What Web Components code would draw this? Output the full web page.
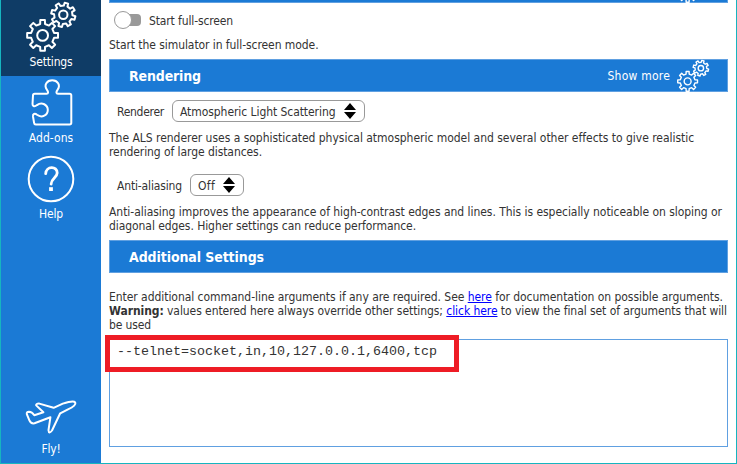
<!DOCTYPE html>
<html lang="en">
<head>
<meta charset="utf-8">
<title>Launcher settings</title>
<style>
html,body{margin:0;height:100%;overflow:hidden;background:#fff}
body{font:12px/14px "DejaVu Sans Condensed","Noto Sans",sans-serif;color:#333}
</style>
</head>
<body>
<launcher-app></launcher-app>
<script>
const define = (name, html, setup) => {
  const t = document.createElement('template');
  t.innerHTML = html;
  customElements.define(name, class extends HTMLElement {
    connectedCallback() {
      if (this.shadowRoot) return;
      this.attachShadow({mode: 'open'}).append(t.content.cloneNode(true));
      if (setup) setup(this, this.shadowRoot);
    }
  });
};

// Outline of an eight-toothed cog around (cx, cy).
const cog = (cx, cy, outer, inner, turn) => {
  const pts = [];
  for (let i = 0; i < 8; i++) {
    for (const [da, r] of [[-12, inner], [-8.5, outer], [8.5, outer], [12, inner]]) {
      const a = (i * 45 + turn + da - 90) * Math.PI / 180;
      pts.push((cx + r * Math.cos(a)).toFixed(2) + ' ' + (cy + r * Math.sin(a)).toFixed(2));
    }
  }
  return 'M' + pts.join('L') + 'Z';
};
const gears = `<path d="${cog(16.6, 33.4, 15.6, 11.7, 0)}"/><circle cx="16.6" cy="33.4" r="5.4"/>
  <path d="${cog(37.3, 12.8, 12.2, 9.2, 15)}"/><circle cx="37.3" cy="12.8" r="4.2"/>`;
const icons = {
  gears,
  puzzle: '<path d="M7 18.5Q7 16.8 8.7 16.8H20.5C22.5 16.8 22.5 14.8 21 12.8C17.5 8 21 3.2 26.2 3.2S35 8 31.5 12.8C30 14.8 30 16.8 32 16.8H43.6Q45.3 16.8 45.3 18.5V45.8Q45.3 47.5 43.6 47.5H9.8Q8.3 47.5 8.1 45.8L7 39.5C6.6 36.8 8.8 36 11 37.8C16 41.5 21.8 38 21.8 33S16 24.3 11 28.1C8.8 30 6.4 29.5 6.5 27Z"/>',
  help: '<circle cx="25" cy="25" r="22.3"/><path d="M19.7 19.7C20 11.7 31.3 11.6 31.2 19.1C31.1 23.5 25.3 24.1 25.1 30.1" stroke-width="2.8"/><path d="M25 33.2V37" stroke-width="3.8" stroke-linecap="butt"/>',
  plane: '<path d="M.9 15.4Q.2 12.8 3 12.8Q6 12.9 8.3 16.3L17.4 13.3L10.2 6.4Q9.7 4.5 13.3 4.6L27.6 8.8L36.8 4.6Q47.4 1.3 49.2 3.3Q50.7 6.4 42 10.3L34.2 14.3L26 31.5Q22.8 35.5 22.5 31.2L24.4 18.3L8.5 24.3Q4.8 24.9 3.4 21.4Z"/>'
};

define('line-icon', `<style>:host{display:block}svg{display:block;width:100%;height:100%;overflow:visible;fill:none;stroke:#fff;stroke-width:var(--stroke,2);stroke-linejoin:round;stroke-linecap:round}</style><svg></svg>`,
(el, root) => {
  const svg = root.querySelector('svg');
  svg.setAttribute('viewBox', el.getAttribute('box'));
  svg.innerHTML = icons[el.getAttribute('name')];
});

// One line of text, tracked so that it spans the given width.
define('text-line', `<style>:host{display:block;white-space:nowrap;height:14px;line-height:14px}span{display:inline-block}</style><span><slot></slot></span>`,
(el, root) => {
  const s = root.querySelector('span');
  const n = el.textContent.length;
  s.style.letterSpacing = ((+el.getAttribute('width') - s.getBoundingClientRect().width) / n).toFixed(4) + 'px';
});

define('nav-item', `<style>
:host{display:block;height:76px;color:#fff;overflow:hidden}
:host([active]){background:#0f3c66}
.in{display:flex;flex-direction:column;align-items:center;height:100%}
.pic{flex:none;height:55px;width:100%}
</style><div class="in"><div class="pic"><slot name="icon"></slot></div><slot></slot></div>`);

define('section-bar', `<style>
:host{display:flex;box-sizing:border-box;height:33px;padding:0 18px 0 19px;border:1px solid #60a0e1;background:#1b7ad5;color:#fff;align-items:center;justify-content:space-between}
.t{font-size:14px;font-weight:bold}
.m{display:flex;gap:7px;align-items:center}
</style><div class="t"><slot></slot></div><div class="m"><slot name="more"></slot></div>`);

define('toggle-switch', `<style>
:host{display:flex;align-items:center;width:27px;height:18px}
.track{width:20px;height:12px;margin-left:7px;border-radius:4px;background:#999;display:flex;align-items:center}
.knob{box-sizing:border-box;flex:none;width:18px;height:18px;margin-left:-7px;border:1px solid #999;border-radius:50%;background:#fff}
</style><div class="track"><div class="knob"></div></div>`);

define('select-box', `<style>
:host{display:flex;box-sizing:border-box;height:22px;border:1px solid #999;border-radius:6px;background:#fff;align-items:center;justify-content:space-between;padding:0 8px 0 7px}
svg{display:block;width:12px;height:16px}
</style><slot></slot><svg viewBox="0 0 12 16"><path d="M6 0L12 7H0ZM0 9H12L6 16Z" fill="#000"/></svg>`);

define('argument-field', `<style>
:host{display:block;position:relative;box-sizing:border-box;height:108px;border:1px solid #60a0e1;padding:5px 7px;font-family:"Liberation Mono",monospace;font-size:13.33px}
.mark{position:absolute;left:-5px;top:-5px;width:354px;height:37px;box-sizing:border-box;border:5px solid #ee1c25}
</style><slot></slot><div class="mark"></div>`);

define('launcher-app', `<style>
:host{display:flex;box-sizing:border-box;width:737px;height:464px;border:solid #16b5c0;border-width:0 1px 1px 1px;overflow:hidden}
nav{flex:none;width:100px;background:#1b7ad5;display:flex;flex-direction:column}
nav nav-item:last-child{margin-top:auto}
main{flex:none;width:619px;padding-left:8px;display:flex;flex-direction:column}
.prev{height:3px;overflow:hidden;display:flex;align-items:flex-end}
.prev section-bar{flex:1}
.row{display:flex;gap:8px;align-items:center;height:22px;padding-left:8px}
a{color:#00f;text-decoration:underline}
b{font-weight:bold}
</style>
<nav>
<nav-item active><line-icon slot="icon" name="gears" box="0 0 50 50" style="width:50px;height:50px;margin:2px 0 0 25px"></line-icon><text-line width="43">Settings</text-line></nav-item>
<nav-item><line-icon slot="icon" name="puzzle" box="0 0 51 51" style="width:51px;height:51px;margin:1px 0 0 25px"></line-icon><text-line width="44.5">Add-ons</text-line></nav-item>
<nav-item><line-icon slot="icon" name="help" box="0 0 51 51" style="width:51px;height:51px;margin:2px 0 0 25px"></line-icon><text-line width="24">Help</text-line></nav-item>
<nav-item><line-icon slot="icon" name="plane" box="0 0 50 36" style="width:50px;height:36px;margin:12px 0 0 25px"></line-icon><text-line width="19">Fly!</text-line></nav-item>
</nav>
<main>
<div class="prev"><section-bar><line-icon slot="more" name="gears" box="0 0 50 50" style="width:32px;height:32px;--stroke:2.2"></line-icon></section-bar></div>
<div class="row" style="margin-top:6px;padding-left:5px;gap:8px"><toggle-switch></toggle-switch><text-line width="84" style="padding-top:1px">Start full-screen</text-line></div>
<text-line style="margin-top:7px" width="209.5">Start the simulator in full-screen mode.</text-line>
<section-bar style="margin-top:7px"><text-line width="72">Rendering</text-line><text-line slot="more" width="62.5" style="padding-top:1px">Show more</text-line><line-icon slot="more" name="gears" box="0 0 50 50" style="width:32px;height:32px;--stroke:2.2"></line-icon></section-bar>
<div class="row" style="margin-top:8px"><text-line width="47" style="padding-top:1px">Renderer</text-line><select-box style="width:193px"><text-line width="155.5" style="padding-top:1px">Atmospheric Light Scattering</text-line></select-box></div>
<text-line style="margin-top:9px" width="585">The ALS renderer uses a sophisticated physical atmospheric model and several other effects to give realistic</text-line>
<text-line width="153">rendering of large distances.</text-line>
<div class="row" style="margin-top:15px"><text-line width="65" style="padding-top:1px">Anti-aliasing</text-line><select-box style="width:54px"><text-line width="17" style="padding-top:1px">Off</text-line></select-box></div>
<text-line style="margin-top:9px" width="613">Anti-aliasing improves the appearance of high-contrast edges and lines. This is especially noticeable on sloping or</text-line>
<text-line width="307">diagonal edges. Higher settings can reduce performance.</text-line>
<section-bar style="margin-top:7px"><text-line width="135">Additional Settings</text-line></section-bar>
<text-line style="margin-top:17px" width="614">Enter additional command-line arguments if any are required. See <a>here</a> for documentation on possible arguments.</text-line>
<text-line width="618"><b>Warning:</b> values entered here always override other settings; <a>click here</a> to view the final set of arguments that will</text-line>
<text-line width="42">be used</text-line>
<argument-field style="margin-top:7px"><text-line width="320">--telnet=socket,in,10,127.0.0.1,6400,tcp</text-line></argument-field>
</main>`);
</script>
</body>
</html>
